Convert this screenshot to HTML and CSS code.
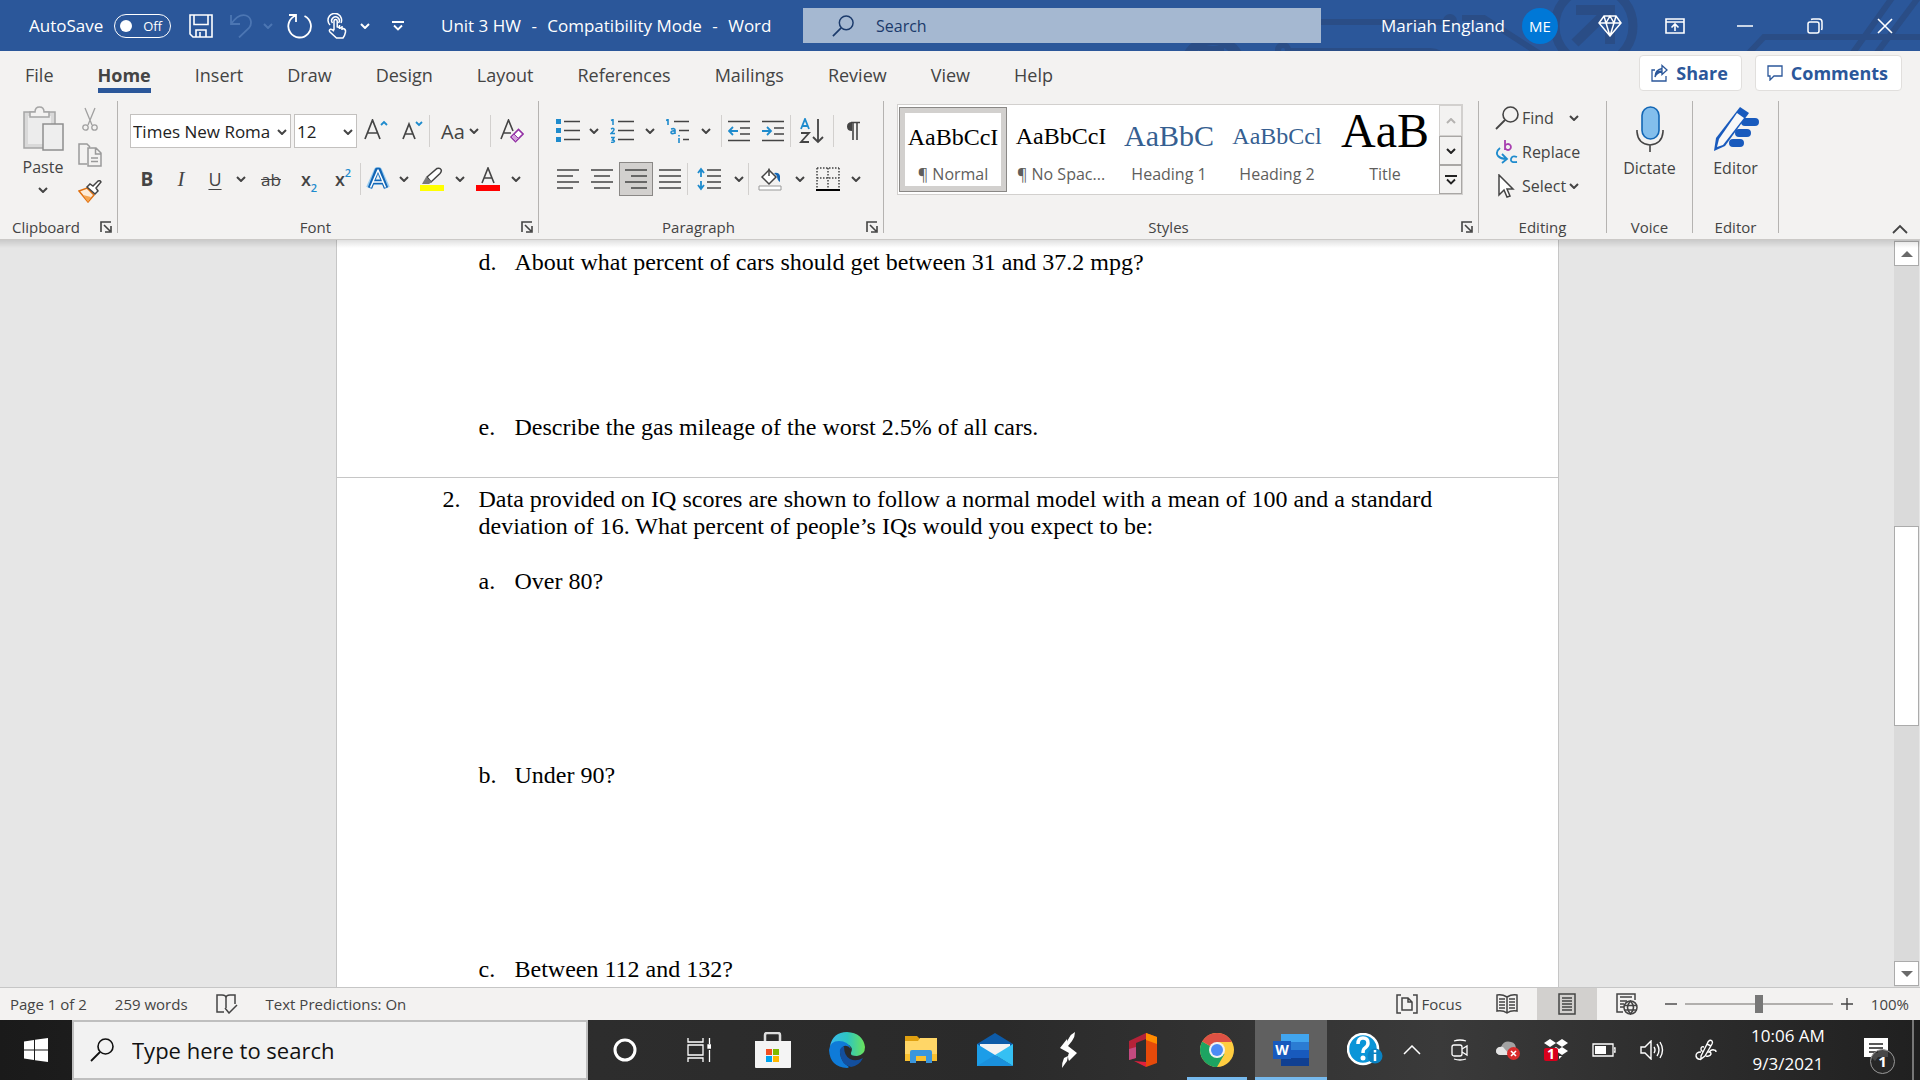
FILE: index.html
```html
<!DOCTYPE html>
<html lang="en">
<head>
<meta charset="UTF-8">
<meta name="viewport" content="width=device-width, initial-scale=1.0">
<title>Unit 3 HW - Compatibility Mode - Word</title>
<link rel="stylesheet" href="styles.css">
</head>
<body>

<!-- shared icons -->
<svg class="defs" width="0" height="0" aria-hidden="true">
  <symbol id="chev" viewBox="0 0 10 6"><path d="M1 1l4 4 4-4" fill="none" stroke="currentColor" stroke-width="2"/></symbol>
  <symbol id="launch" viewBox="0 0 12 12"><path d="M1 11V1h10M4 4l6 6M11 5v6H5" fill="none" stroke="currentColor" stroke-width="1.6"/></symbol>
  <symbol id="lens" viewBox="0 0 24 24"><circle cx="15.5" cy="8.500" r="7.500" fill="none" stroke="currentColor" stroke-width="1.600"/><path d="M10 14L1 23" stroke="currentColor" stroke-width="1.800"/></symbol>
</svg>

<header class="titlebar">
  <svg class="titlebar-art" width="760" height="51" viewBox="1160 0 760 51" aria-hidden="true">
    <g fill="none" stroke="#2a4d86" stroke-width="6">
      <path d="M1300 22h150M1462 18h22l56 36M1290 51h140q8 0 14 6M1748 54l16-17h156M1852 54l40-56M1876 54l42-56"/>
      <circle cx="1283" cy="50" r="5"/>
      <circle cx="1213" cy="68" r="28" stroke-width="10"/>
      <circle cx="1594" cy="26" r="39" stroke-width="9"/>
      <path d="M1576 10h34v34M1575 43l34-33" stroke-width="10"/>
    </g>
    <circle cx="1450" cy="21" r="7" fill="#2a4d86"/>
    <path d="M1199 46h25v5h-25z" fill="#2a4d86"/>
  </svg>
  <div class="title-left">
    <label class="autosave">AutoSave
      <span class="toggle"><input type="checkbox">Off</span>
    </label>
    <div class="quick">
      <button class="q40" aria-label="Save"><svg width="24" height="24" viewBox="0 0 24 24" fill="none" stroke="#fff" stroke-width="1.600"><path d="M1 1h22v22H4l-3-3zM5 1v9.500h14V1M7 23v-7h10v7M11 18v5"/></svg></button>
      <button class="q40 dim" aria-label="Undo"><svg width="24" height="24" viewBox="0 0 24 24" fill="none" stroke="currentColor" stroke-width="1.800"><path d="M2 1v9h9M2 10C7 3 12 0 17 1.500c6 2 6 9 3 12.500L10 23.500"/></svg></button>
      <button class="q14 dim" aria-label="Undo options"><svg width="10" height="6"><use href="#chev"/></svg></button>
      <button class="q50" aria-label="Repeat"><svg width="26" height="26" viewBox="0 0 26 26" fill="none" stroke="#fff" stroke-width="1.800"><path d="M2 2h7v7M9 2.500A11.300 11.300 0 1 0 17.500 3"/></svg></button>
      <button class="q24" aria-label="Touch mode"><svg width="20" height="26" viewBox="0 0 20 26" fill="none" stroke="#fff" stroke-width="1.500"><path d="M3 12a6.800 6.800 0 1 1 11-2"/><path d="M5.500 10a3.800 3.800 0 1 1 6 0" /><path d="M7 17V8a1.600 1.600 0 0 1 3.200 0v6l6 1.500q2.800.7 2.300 3.500l-1 3.500L16 25H9.500L3 19q-1.500-2 .5-2.800 1.500-.4 3.500 2M12.500 12v4M15 13v4"/></svg></button>
      <button class="q32" aria-label="Touch options"><svg width="10" height="6"><use href="#chev"/></svg></button>
      <button class="q34" aria-label="Customize Quick Access Toolbar"><svg width="12" height="10" viewBox="0 0 12 10" fill="none" stroke="#fff" stroke-width="1.800"><path d="M0 1h12M2 4.500l4 4 4-4"/></svg></button>
    </div>
    <h1 class="doc-title">Unit 3 HW <span>-</span> Compatibility Mode <span>-</span> Word</h1>
  </div>
  <label class="title-search">
    <svg width="22" height="22"><use href="#lens"/></svg>
    <input type="text" placeholder="Search" aria-label="Search">
  </label>
  <div class="title-right">
    <span class="user">Mariah England</span>
    <button class="avatar">ME</button>
    <button class="q60" aria-label="Premium"><svg width="24" height="22" viewBox="0 0 24 22" fill="none" stroke="#fff" stroke-width="1.500"><path d="M6 1h12l5 7-11 13L1 8zM1 8h22M6 1l2 7 4 13 4-13 2-7M8 8l4-7 4 7"/></svg></button>
    <button class="q70" aria-label="Ribbon display options"><svg width="20" height="16" viewBox="0 0 20 16" fill="none" stroke="#fff" stroke-width="1.600"><path d="M1 1h18v14H1zM1 4h18M10 13V6.500M6.500 9.500L10 6l3.500 3.500"/></svg></button>
    <button class="q70" aria-label="Minimize"><svg width="16" height="16" viewBox="0 0 16 16"><path d="M0 8h16" stroke="#fff" stroke-width="1.500"/></svg></button>
    <button class="q70" aria-label="Restore"><svg width="16" height="16" viewBox="0 0 16 16" fill="none" stroke="#fff" stroke-width="1.500"><rect x="1" y="4" width="11" height="11" rx="2"/><path d="M4 1.500Q5 1 6 1h6q3 0 3 3v6q0 1-.5 2"/></svg></button>
    <button class="q70" aria-label="Close"><svg width="16" height="16" viewBox="0 0 16 16"><path d="M1 1l14 14M15 1L1 15" stroke="#fff" stroke-width="1.600"/></svg></button>
  </div>
</header>

<nav class="tabs">
  <a href="#">File</a>
  <a href="#" class="active">Home</a>
  <a href="#">Insert</a>
  <a href="#">Draw</a>
  <a href="#">Design</a>
  <a href="#">Layout</a>
  <a href="#">References</a>
  <a href="#">Mailings</a>
  <a href="#">Review</a>
  <a href="#">View</a>
  <a href="#">Help</a>
  <div class="tab-actions">
    <button class="action"><svg width="17" height="18" viewBox="0 0 17 18" fill="none" stroke="currentColor" stroke-width="1.300"><path d="M4 6H1v11h14v-5M4 13q1-6 7-6V3.500V10.500M11 1.500l5 4.500-5 4.500V8q-5 0-7 5 0-7 7-8.500z"/></svg>Share</button>
    <button class="action"><svg width="16" height="16" viewBox="0 0 16 16" fill="none" stroke="currentColor" stroke-width="1.300"><path d="M1 1h14v10H7l-4 4v-4H1z"/></svg>Comments</button>
  </div>
</nav>

<section class="ribbon">
  <div class="group clipboard">
    <div class="clip-body">
      <button class="big">
        <svg width="41" height="45" viewBox="0 0 41 45"><path d="M1 6h31v36H1z" fill="#d9d9d9" stroke="#a5a5a5" stroke-width="1.500"/><path d="M5 10h23v28H5z" fill="#ececec"/><path d="M7 11V6h5q0-5 4.500-5T21 6h5v5z" fill="#f3f2f1" stroke="#a5a5a5" stroke-width="1.500"/><path d="M20 18h20v26H20z" fill="#eee" stroke="#8e8e8e" stroke-width="1.500"/></svg>
        Paste
        <svg class="below" width="10" height="6"><use href="#chev"/></svg>
      </button>
      <div class="clip-tools">
        <button aria-label="Cut"><svg width="16" height="24" viewBox="0 0 16 24" fill="none" stroke="#a0a0a0" stroke-width="1.300"><path d="M3 1l7 17M13 1L6 18"/><circle cx="3.500" cy="20.500" r="2.700"/><circle cx="12.500" cy="20.500" r="2.700"/></svg></button>
        <button aria-label="Copy"><svg width="24" height="24" viewBox="0 0 24 24" fill="none" stroke="#9a9a9a" stroke-width="1.500"><path d="M9 21H1V1h8l3 3M10 5h8l5 5v13H10zM17.500 5v6H23M13 15h7M13 18.500h7"/></svg></button>
        <button aria-label="Format Painter"><svg width="24" height="24" viewBox="0 0 24 24"><path d="M1 12l8-3 7 7-6 7z" fill="#fdebd7" stroke="#e07010" stroke-width="1.500"/><path d="M5 16l8 2-3 5z" fill="#f5a550"/><path d="M9 8l3-3 3 2 5-5q2-1 3 1l-5 6 2 3-3 3z" fill="#fff" stroke="#444" stroke-width="1.500"/></svg></button>
      </div>
    </div>
    <footer class="with-launch">Clipboard<button class="launch" aria-label="Clipboard settings"><svg width="12" height="12"><use href="#launch"/></svg></button></footer>
  </div>
  <div class="divider"></div>

  <div class="group font">
    <div class="row">
      <span class="combo family"><select aria-label="Font"><option>Times New Roma</option></select><svg width="10" height="6"><use href="#chev"/></svg></span>
      <span class="combo size"><select aria-label="Font size"><option>12</option></select><svg width="10" height="6"><use href="#chev"/></svg></span>
      <button class="w38" aria-label="Grow font"><svg width="24" height="24" viewBox="0 0 24 24" fill="none"><path d="M1 20L8.500 1 16 20M4 14h9" stroke="#444" stroke-width="1.700"/><path d="M17 6l3-3 3 3" stroke="#1e8bcd" stroke-width="1.800"/></svg></button>
      <button aria-label="Shrink font"><svg width="24" height="24" viewBox="0 0 24 24" fill="none"><path d="M3 20L9 5l6 15M5 15h8" stroke="#444" stroke-width="1.700"/><path d="M16 3l3 3 3-3" stroke="#1e8bcd" stroke-width="1.800"/></svg></button>
      <i class="sep"></i>
      <button class="case">Aa<svg width="10" height="6"><use href="#chev"/></svg></button>
      <i class="sep"></i>
      <button class="w42" aria-label="Clear formatting"><svg width="24" height="24" viewBox="0 0 24 24" fill="none"><path d="M1 20L8.500 1l4.500 11M4 14h7" stroke="#444" stroke-width="1.600"/><path d="M11 18l7.500-7.500 4.500 4.500-7.500 7.500z" fill="#fff" stroke="#9332a5" stroke-width="1.600"/><path d="M11 18l3-3 4.500 4.500-3 3z" fill="#d29fdc" stroke="#9332a5"/></svg></button>
    </div>
    <div class="row">
      <button class="bold">B</button>
      <button class="italic">I</button>
      <button class="underline">U</button>
      <button class="drop" aria-label="Underline style"><svg width="10" height="6"><use href="#chev"/></svg></button>
      <button class="strike w42">ab</button>
      <button class="script">x<sub>2</sub></button>
      <button class="script">x<sup>2</sup></button>
      <i class="sep"></i>
      <button aria-label="Text effects"><svg width="24" height="24" viewBox="0 0 24 24" fill="none" stroke-linejoin="round"><path d="M3 21L11 3h2l8 18M7 15h10" stroke="#9ccdf0" stroke-width="6"/><path d="M4 21L11 3h2l7 18M7 15h10" stroke="#1266b5" stroke-width="4.500"/><path d="M4.500 20.500L12 3l7.500 17.500M7 15h10" stroke="#fff" stroke-width="1.500"/></svg></button>
      <button class="drop" aria-label="Text effect options"><svg width="10" height="6"><use href="#chev"/></svg></button>
      <button class="w38" aria-label="Highlight"><svg width="24" height="24" viewBox="0 0 24 24"><path d="M7 10l10-8.500q3-1 4 1t-1 4L11 15z" fill="#fff" stroke="#444" stroke-width="1.500"/><path d="M6 10l6 5-3 2H2z" fill="#7a7a7a"/><path d="M0 18h24v6H0z" fill="#ff0"/></svg></button>
      <button class="drop" aria-label="Highlight color"><svg width="10" height="6"><use href="#chev"/></svg></button>
      <button class="w38" aria-label="Font color"><svg width="24" height="24" viewBox="0 0 24 24"><path d="M6 16L12 1l6 15M8 11h8" fill="none" stroke="#444" stroke-width="1.600"/><path d="M0 18h24v6H0z" fill="red"/></svg></button>
      <button class="drop" aria-label="Font color options"><svg width="10" height="6"><use href="#chev"/></svg></button>
    </div>
    <footer class="with-launch">Font<button class="launch" aria-label="Font settings"><svg width="12" height="12"><use href="#launch"/></svg></button></footer>
  </div>
  <div class="divider"></div>

  <div class="group paragraph">
    <div class="row">
      <button aria-label="Bullets"><svg width="24" height="24" viewBox="0 0 24 24"><path d="M0 0h5v5H0zM0 9h5v5H0zM0 18h5v5H0z" fill="#1e8bcd"/><path d="M8 2.500h16M8 11.500h16M8 20.500h16" stroke="#444" stroke-width="1.500"/></svg></button>
      <button class="drop" aria-label="Bullet library"><svg width="10" height="6"><use href="#chev"/></svg></button>
      <button class="w38" aria-label="Numbering"><svg width="24" height="24" viewBox="0 0 24 24"><path d="M1 1.500L3 .5V6M1 10q3-1.500 3 .5 0 1-3 4h4M1 18.500h3L2.500 21q2 0 2 1.200T1 23.500" fill="none" stroke="#1e8bcd" stroke-width="1.500"/><path d="M8 2.500h16M8 11.500h16M8 20.500h16" stroke="#444" stroke-width="1.500"/></svg></button>
      <button class="drop" aria-label="Numbering library"><svg width="10" height="6"><use href="#chev"/></svg></button>
      <button class="w38" aria-label="Multilevel list"><svg width="24" height="24" viewBox="0 0 24 24"><path d="M0 1.500L2 .5V6M5 10q4-1 4 1v4M9 12q-4-.5-4 1.500T9 14M13 19v5M13 16v1.500" fill="none" stroke="#1e8bcd" stroke-width="1.600"/><path d="M8 2.500h15M13 11.500h10M17 20.500h6" stroke="#444" stroke-width="1.500"/></svg></button>
      <button class="drop roomy" aria-label="List library"><svg width="10" height="6"><use href="#chev"/></svg></button>
      <i class="sep"></i>
      <button aria-label="Decrease indent"><svg width="22" height="22" viewBox="0 0 22 22" fill="none" stroke="#444" stroke-width="1.500"><path d="M0 1.500h22M12 8h10M12 14h10M0 20.500h22"/><path d="M10 11H1M5 7l-4 4 4 4" stroke="#1e8bcd" stroke-width="1.800"/></svg></button>
      <button aria-label="Increase indent"><svg width="22" height="22" viewBox="0 0 22 22" fill="none" stroke="#444" stroke-width="1.500"><path d="M0 1.500h22M12 8h10M12 14h10M0 20.500h22"/><path d="M0 11h9M5 7l4 4-4 4" stroke="#1e8bcd" stroke-width="1.800"/></svg></button>
      <i class="sep"></i>
      <button class="w42" aria-label="Sort"><svg width="26" height="26" viewBox="0 0 26 26" fill="none" stroke-width="1.800"><path d="M2 11L6 1l4 10M3 8h6" stroke="#1e8bcd"/><path d="M2 15h8L2 24h8M19 1v23M14 19l5 5 5-5" stroke="#444"/></svg></button>
      <i class="sep"></i>
      <button class="w38" aria-label="Show marks"><svg width="14" height="20" viewBox="0 0 14 20"><path d="M6 1v9q-5 0-5-4.500T6 1z" fill="#444"/><path d="M5 1.500h9M7 1v18M11 1v18" stroke="#444" stroke-width="1.600"/></svg></button>
    </div>
    <div class="row">
      <button aria-label="Align left"><svg width="22" height="22" viewBox="0 0 22 22" stroke="#444" stroke-width="1.600"><path d="M0 2h22M0 8h16M0 14h22M0 20h16"/></svg></button>
      <button aria-label="Center"><svg width="22" height="22" viewBox="0 0 22 22" stroke="#444" stroke-width="1.600"><path d="M0 2h22M3 8h16M0 14h22M3 20h16"/></svg></button>
      <button class="on" aria-label="Align right"><svg width="22" height="22" viewBox="0 0 22 22" stroke="#444" stroke-width="1.600"><path d="M0 2h22M6 8h16M0 14h22M6 20h16"/></svg></button>
      <button aria-label="Justify"><svg width="22" height="22" viewBox="0 0 22 22" stroke="#444" stroke-width="1.600"><path d="M0 2h22M0 8h22M0 14h22M0 20h22"/></svg></button>
      <i class="sep"></i>
      <button class="w42" aria-label="Line spacing"><svg width="24" height="24" viewBox="0 0 24 24" fill="none"><path d="M10 3h14M10 9h14M10 15h14M10 21h14" stroke="#444" stroke-width="1.600"/><path d="M4 10V2M1 6l3-4 3 4M4 14v8M1 18l3 4 3-4" stroke="#1e8bcd" stroke-width="1.800"/></svg></button>
      <button class="drop" aria-label="Spacing options"><svg width="10" height="6"><use href="#chev"/></svg></button>
      <i class="sep"></i>
      <button class="w42" aria-label="Shading"><svg width="24" height="24" viewBox="0 0 24 24"><path d="M11 3l7 7-7 7-7-7z" fill="#fff" stroke="#444" stroke-width="1.500"/><path d="M11 9V1.500" stroke="#444" stroke-width="1.500"/><path d="M16 6q5-1 6 3v6q-3-2-3-6z" fill="#1266b5"/><path d="M1 19h22v4H1z" fill="#fff" stroke="#999"/></svg></button>
      <button class="drop" aria-label="Shading color"><svg width="10" height="6"><use href="#chev"/></svg></button>
      <button class="w38" aria-label="Borders"><svg width="24" height="24" viewBox="0 0 24 24" fill="none" stroke="#444" stroke-width="1.500"><path d="M1 1h22M1 11h22M1 1v20M12 1v20M23 1v20" stroke-dasharray="1.500 1.500"/><path d="M0 23h24" stroke="#000" stroke-width="2"/></svg></button>
      <button class="drop" aria-label="Border options"><svg width="10" height="6"><use href="#chev"/></svg></button>
    </div>
    <footer class="with-launch">Paragraph<button class="launch" aria-label="Paragraph settings"><svg width="12" height="12"><use href="#launch"/></svg></button></footer>
  </div>
  <div class="divider"></div>

  <div class="group styles">
    <div class="gallery">
      <button class="style selected"><span class="sample">AaBbCcI</span><span>¶ Normal</span></button>
      <button class="style"><span class="sample">AaBbCcI</span><span>¶ No Spac...</span></button>
      <button class="style"><span class="sample h1">AaBbC</span><span>Heading 1</span></button>
      <button class="style"><span class="sample h2">AaBbCcl</span><span>Heading 2</span></button>
      <button class="style"><span class="sample title">AaB</span><span>Title</span></button>
      <div class="gallery-nav">
        <button class="off" aria-label="Previous styles"><svg class="flip" width="10" height="6"><use href="#chev"/></svg></button>
        <button aria-label="Next styles"><svg width="10" height="6"><use href="#chev"/></svg></button>
        <button aria-label="More styles"><svg width="12" height="10" viewBox="0 0 12 10" fill="none" stroke="#222" stroke-width="1.800"><path d="M0 1h12M2 4.500l4 4 4-4"/></svg></button>
      </div>
    </div>
    <footer class="with-launch">Styles<button class="launch" aria-label="Styles pane"><svg width="12" height="12"><use href="#launch"/></svg></button></footer>
  </div>
  <div class="divider"></div>

  <div class="group editing">
    <div class="edit-list">
      <button><svg width="24" height="24"><use href="#lens"/></svg>Find<svg class="far" width="10" height="6"><use href="#chev"/></svg></button>
      <button><svg width="24" height="24" viewBox="0 0 24 24" fill="none" stroke-width="1.800"><path d="M10 0v10M10 6.500a3 3 0 1 1 0 1" stroke="#a83fb0"/><path d="M22 17q-5-2-6 2t6 3" stroke="#1e8bcd"/><path d="M5 8q-5 4-2 8 3 3 8 3M7 14l5 5-5 4" stroke="#1e8bcd"/></svg>Replace</button>
      <button><svg width="24" height="24" viewBox="0 0 24 24"><path d="M4 1v20l5-5 3 7 3-1-3-7h6z" fill="#fff" stroke="#444" stroke-width="1.500"/></svg>Select<svg width="10" height="6"><use href="#chev"/></svg></button>
    </div>
    <footer>Editing</footer>
  </div>
  <div class="divider"></div>

  <div class="group voice">
    <button class="big">
      <svg width="28" height="46" viewBox="0 0 28 46" fill="none"><rect x="6" y="1" width="17" height="32" rx="8.500" fill="#83beec" stroke="#1266b5" stroke-width="1.600"/><path d="M1 24v2q1 12 13 13 12-1 13-13v-2M14 39v7" stroke="#444" stroke-width="1.600"/></svg>
      Dictate
    </button>
    <footer>Voice</footer>
  </div>
  <div class="divider"></div>

  <div class="group editor">
    <button class="big">
      <svg width="46" height="46" viewBox="0 0 46 46"><path d="M32 16h10M26 27h8M20 37h7" stroke="#185abd" stroke-width="8" stroke-linecap="round"/><path d="M27 1l9 6-24 33-11 5 2-13z" fill="#185abd"/><path d="M24 7l7 5-21 27-6 2 2-8z" fill="#f8f8f8"/></svg>
      Editor
    </button>
    <footer>Editor</footer>
  </div>
  <div class="divider"></div>
  <button class="collapse" aria-label="Collapse the ribbon"><svg width="16" height="10" viewBox="0 0 16 10"><path d="M1 9l7-7 7 7" fill="none" stroke="#444" stroke-width="1.800"/></svg></button>
</section>

<main class="workspace">
  <article class="page">
    <div class="sheet first">
      <p class="part gap-5"><span>d.</span>About what percent of cars should get between 31 and 37.2 mpg?</p>
      <p class="part"><span>e.</span>Describe the gas mileage of the worst 2.5% of all cars.</p>
    </div>
    <div class="sheet">
      <p class="question"><span>2.</span>Data provided on IQ scores are shown to follow a normal model with a mean of 100 and a standard deviation of 16. What percent of people’s IQs would you expect to be:</p>
      <p class="part gap-6"><span>a.</span>Over 80?</p>
      <p class="part gap-6"><span>b.</span>Under 90?</p>
      <p class="part"><span>c.</span>Between 112 and 132?</p>
    </div>
  </article>
  <div class="scrollbar">
    <button aria-label="Scroll up"><svg width="12" height="6" viewBox="0 0 12 6"><path d="M6 0l6 6H0z" fill="#6a6a6a"/></svg></button>
    <div class="track"><div class="thumb"></div></div>
    <button aria-label="Scroll down"><svg width="12" height="6" viewBox="0 0 12 6"><path d="M0 0h12L6 6z" fill="#6a6a6a"/></svg></button>
  </div>
</main>

<footer class="statusbar">
  <span class="pages">Page 1 of 2</span>
  <span>259 words</span>
  <button aria-label="Proofing"><svg width="22" height="20" viewBox="0 0 22 20" fill="none" stroke="#444" stroke-width="1.500"><path d="M8 18H1V1h5q4 0 4 3v10M10 4q0-3 4-3h5v9M9 14l4 5 8-8"/></svg></button>
  <span>Text Predictions: On</span>
  <div class="views">
    <button class="focus"><svg width="22" height="20" viewBox="0 0 22 20" fill="none" stroke="#444" stroke-width="1.500"><path d="M5 1H1v18h4M17 1h4v18h-4M6 4h6l4 4v8H6zM12 4v4h4"/></svg>Focus</button>
    <button aria-label="Read mode"><svg width="22" height="20" viewBox="0 0 22 20" fill="none" stroke="#444" stroke-width="1.500"><path d="M11 3Q6 0 1 1v16q6-1 10 2 4-3 10-2V1q-5-1-10 2v16M3 5h6M3 8h6M3 11h6M3 14h6M13 5h6M13 8h6M13 11h6M13 14h6"/></svg></button>
    <button class="on" aria-label="Print layout"><svg width="18" height="22" viewBox="0 0 18 22" fill="none" stroke="#444" stroke-width="1.500"><path d="M1 1h16v20H1zM4 5h10M4 8h10M4 11h10M4 14h10M4 17h10"/></svg></button>
    <button aria-label="Web layout"><svg width="22" height="22" viewBox="0 0 22 22" fill="none" stroke="#444" stroke-width="1.500"><path d="M7 19H1V1h18v6M4 4h12M4 8h7M4 11h4M4 14h4"/><circle cx="14.500" cy="14.500" r="6.500" fill="#f3f2f1"/><path d="M8 12.500h13M8 17h13M14.500 8q-6 6.500 0 13 6-6.500 0-13z"/></svg></button>
  </div>
  <div class="zoom">
    <button aria-label="Zoom out"><svg width="12" height="12" viewBox="0 0 12 12"><path d="M0 6h12" stroke="#444" stroke-width="1.400"/></svg></button>
    <input type="range" min="0" max="100" value="50" aria-label="Zoom">
    <button aria-label="Zoom in"><svg width="12" height="12" viewBox="0 0 12 12"><path d="M0 6h12M6 0v12" stroke="#444" stroke-width="1.400"/></svg></button>
    <span>100%</span>
  </div>
</footer>

<footer class="taskbar">
  <button class="start" aria-label="Start"><svg width="24" height="24" viewBox="0 0 24 24" fill="#fff"><path d="M0 3.500l10-1.500v9.500H0zM11 1.800L24 0v11.500H11zM0 12.500h10V22L0 20.500zM11 12.500h13V24l-13-1.800z"/></svg></button>
  <label class="task-search">
    <svg width="24" height="24"><use href="#lens"/></svg>
    <input type="text" placeholder="Type here to search" aria-label="Type here to search">
  </label>
  <div class="apps">
    <button aria-label="Cortana"><svg width="24" height="24" viewBox="0 0 24 24"><circle cx="12" cy="12" r="10" fill="none" stroke="#fff" stroke-width="3"/></svg></button>
    <button aria-label="Task view"><svg width="24" height="24" viewBox="0 0 24 24" fill="none" stroke="#fff" stroke-width="1.300"><path d="M1 0v4h15V0M1 7h15v10H1zM1 24v-4h15v4M22.500 0v6M22.500 12v12"/><path d="M21 7h3v3h-3z" fill="#fff"/></svg></button>
    <button aria-label="Store"><svg width="36" height="36" viewBox="0 0 36 36"><path d="M10 12V3q0-2 2-2h11q2 0 2 2v9" fill="none" stroke="#ddd" stroke-width="2.500"/><path d="M0 9h36v26q0 1-1 1H1q-1 0-1-1z" fill="#f4f4f4"/><path d="M11 17h6v6h-6z" fill="#f25022"/><path d="M18 17h6v6h-6z" fill="#7fba00"/><path d="M11 24h6v6h-6z" fill="#00a4ef"/><path d="M18 24h6v6h-6z" fill="#ffb900"/></svg></button>
    <button aria-label="Edge"><svg width="36" height="36" viewBox="0 0 36 36">
      <defs><linearGradient id="edge" x1="0" x2="1"><stop offset="0" stop-color="#38b9ef"/><stop offset=".5" stop-color="#2ec6c0"/><stop offset="1" stop-color="#6be35a"/></linearGradient></defs>
      <path d="M1 14Q4 0 18 0q16 1 18 15 0 8-8 9-7 0-6-3 3-6-4-9-8-3-17 2z" fill="url(#edge)"/>
      <path d="M0 18Q1 9 10 9q9 0 12 8-3-4-7-3-4 2-4 7 1 9 9 14-1 1-2 1Q1 35 0 18z" fill="#0f7bd8"/>
      <path d="M15 14q-5 2-4 7 1 12 11 14 8-1 12-9-7 4-13 1-6-3-6-13z" fill="#134f9e"/></svg></button>
    <button aria-label="File Explorer"><svg width="32" height="28" viewBox="0 0 32 28"><path d="M0 0h12l3 3v3H0z" fill="#e0a010"/><path d="M0 5h13l2-3h17v23H0z" fill="#ffd667"/><path d="M0 18h32v7H0z" fill="#f9c02f"/><path d="M5 27V16q0-2 2-2h18q2 0 2 2v11h-6v-7H11v7z" fill="#3a96dd"/></svg></button>
    <button aria-label="Mail"><svg width="36" height="34" viewBox="0 0 36 34"><path d="M0 11L18 0l18 11v8H0z" fill="#0d5ba8"/><path d="M3 11h30v6L18 24 3 17z" fill="#f2f2f2"/><path d="M0 11l36 22H0z" fill="#1c9de8"/><path d="M36 11v22L18 22z" fill="#35c0f3"/><path d="M0 33l18-11 18 11z" fill="#1a90dc"/></svg></button>
    <button aria-label="S app"><svg width="18" height="36" viewBox="0 0 18 36" fill="#fff"><path d="M15 0q0 5-3 9l-4 5q-2-4 1-8 2-4 6-6zM7 7l1 7 9 7-8 8q-2-5 0-8L0 16z"/><path d="M8 24l-1 5-5 7q0-6 2-10z"/></svg></button>
    <button aria-label="Office"><svg width="28" height="34" viewBox="0 0 28 34"><path d="M0 8L17 0v6L7 10v15l-7 2z" fill="#b52238"/><path d="M0 16l7-2v11l-7 2z" fill="#c44a80"/><path d="M17 0l11 4v26l-11 4z" fill="#e64a0a"/><path d="M17 0l11 4v7l-11-4z" fill="#ff8c00"/><path d="M5 28l12 1v5z" fill="#e0203c"/></svg></button>
    <button class="running" aria-label="Chrome"><svg width="34" height="34" viewBox="0 0 34 34"><circle cx="17" cy="17" r="17" fill="#ffcd40"/><path d="M17 17L2.300 8.500A17 17 0 0 0 17 34l7.500-13z" fill="#1da462"/><path d="M17 17L2.300 8.500A17 17 0 0 1 32 9H17z" fill="#dd5144"/><circle cx="17" cy="17" r="8" fill="#f1f1f1"/><circle cx="17" cy="17" r="6" fill="#4c8bf5"/></svg></button>
    <button class="running current" aria-label="Word"><svg width="36" height="32" viewBox="0 0 36 32"><path d="M8 0h28v8H8z" fill="#41a5ee"/><path d="M8 8h28v8H8z" fill="#2b7cd3"/><path d="M8 16h28v8H8z" fill="#185abd"/><path d="M8 24h28v8H8z" fill="#103f91"/><path d="M0 7h18v18H0z" fill="#185abd"/><text class="w" x="9" y="21">W</text></svg></button>
    <button aria-label="Get Help"><svg width="36" height="34" viewBox="0 0 36 34"><circle cx="16" cy="16" r="15" fill="#0a95d8" stroke="#fff" stroke-width="2.500"/><path d="M11 11q0-6 5-6t5 5q0 3-3 5-2 1-2 5" fill="none" stroke="#fff" stroke-width="3.500"/><circle cx="16" cy="25" r="2.500" fill="#fff"/><circle cx="28" cy="23" r="7.500" fill="#0a83c4"/><path d="M28 21v7M28 17v2.500" stroke="#fff" stroke-width="2.500"/></svg></button>
  </div>
  <div class="tray">
    <button class="more" aria-label="Show hidden icons"><svg width="18" height="10" viewBox="0 0 18 10"><path d="M1 9l8-8 8 8" fill="none" stroke="#fff" stroke-width="1.500"/></svg></button>
    <button aria-label="Meet Now"><svg width="18" height="22" viewBox="0 0 18 22" fill="none" stroke="#fff" stroke-width="1.300"><rect x="1" y="6" width="10" height="11" rx="2"/><path d="M11 10l5-3v9l-5-3M3 2q6-2 12 0M3 20q6 2 12 0"/></svg></button>
    <button aria-label="OneDrive"><svg width="24" height="20" viewBox="0 0 24 20"><path d="M4 15q-4-1-4-4 0-4 5-4 3-7 10-5 5 1 5 7 0 6-4 6z" fill="#a2a2a2"/><path d="M4 15q-4-1-4-4 1-5 7-4l7 8z" fill="#e4e4e4"/><circle cx="17.500" cy="13.500" r="6.500" fill="#d92c2c"/><path d="M15 11l5 5M20 11l-5 5" stroke="#fff" stroke-width="1.600"/></svg></button>
    <button aria-label="Dropbox"><svg width="24" height="22" viewBox="0 0 24 22"><path d="M6 0l6 4-6 4-6-4zM18 0l6 4-6 4-6-4zM18 8l6 4-6 4-6-4zM12 8l3 2-3 3-3-3zM15 17h3l-3 3z" fill="#fff"/><rect y="9" width="14" height="13" rx="2" fill="#d8001c"/><text class="badge" x="7" y="20">1</text></svg></button>
    <button aria-label="Battery"><svg width="24" height="14" viewBox="0 0 24 14"><path d="M1 1h20v12H1zM22 5h1v4h-1" fill="none" stroke="#fff" stroke-width="1.300"/><path d="M3 3h11v8H3z" fill="#fff"/></svg></button>
    <button aria-label="Volume"><svg width="24" height="20" viewBox="0 0 24 20" fill="none" stroke="#fff" stroke-width="1.400"><path d="M1 7h4l6-6v18l-6-6H1zM14 7q2 3 0 6M17 4q4 6 0 12M20 2q5 8 0 16"/></svg></button>
    <button class="pen" aria-label="Windows Ink"><svg width="22" height="22" viewBox="0 0 22 22" fill="none" stroke="#fff" stroke-width="1.400"><path d="M6 17L13 3q2-3 4-1 1 1 0 3L10 17l-4 3zM12 5l4 2M9 8q-3-1-3 2t3 2M6 13q-5 0-5 4 1 4 5 3M11 17q4 1 5-2 0-2-2-2 3-3 5-2 2 0 2 2"/></svg></button>
    <button class="clock"><span>10:06 AM</span><span>9/3/2021</span></button>
    <button class="notify" aria-label="Notifications"><svg width="24" height="24" viewBox="0 0 24 24"><path d="M0 0h24v19H14l-3 4-4-4H0z" fill="#fff"/><path d="M5 6h14M5 10h14M5 14h9" stroke="#222" stroke-width="1.300"/></svg><b>1</b></button>
    <button class="desktop" aria-label="Show desktop"></button>
  </div>
</footer>

</body>
</html>
```

FILE: styles.css
```css
* {
  box-sizing: border-box;
}
body {
  margin: 0;
  height: 100vh;
  display: flex;
  flex-direction: column;
  overflow: hidden;
  font-family: "Open Sans", "Noto Sans", sans-serif;
  font-size: 17px;
  color: #444;
  background-color: #e6e6e6;
}
button {
  display: flex;
  align-items: center;
  justify-content: center;
  flex-shrink: 0;
  padding: 0;
  border: none;
  background: none;
  color: inherit;
  font: inherit;
}
input, select {
  font: inherit;
  color: inherit;
  border: none;
  background: none;
  outline: none;
}
p, h1 {
  margin: 0;
}
svg {
  display: block;
  flex-shrink: 0;
}
.defs {
  position: absolute;
}

/* title bar */
.titlebar {
  position: relative;
  display: grid;
  grid-template-columns: 803fr 518fr 599fr;
  align-items: center;
  height: 51px;
  flex-shrink: 0;
  background-color: #2b579a;
  color: #fff;
}
.titlebar-art {
  position: absolute;
  right: 0;
  top: 0;
}
.title-left, .title-right, .quick, .autosave {
  display: flex;
  align-items: center;
}
.title-left {
  padding-left: 29px;
}
.autosave {
  width: 152px;
  justify-content: space-between;
  padding-right: 10px;
}
.toggle {
  display: flex;
  align-items: center;
  justify-content: space-between;
  width: 57px;
  height: 24px;
  padding: 0 8px 0 5px;
  border: 1px solid #fff;
  border-radius: 12px;
  font-size: 13px;
}
.toggle input {
  appearance: none;
  width: 12px;
  height: 12px;
  margin: 0;
  border-radius: 50%;
  background-color: #fff;
}
.dim {
  color: #4c76b3;
}
.q14 { width: 14px; }
.q24 { width: 24px; }
.q32 { width: 32px; }
.q34 { width: 34px; }
.q40 { width: 40px; }
.q50 { width: 50px; }
.q60 { width: 60px; }
.q70 { width: 70px; }
.doc-title {
  padding-left: 26px;
  font-size: 17px;
  font-weight: 400;
  white-space: nowrap;
}
.doc-title span {
  padding: 0 6px;
}
.title-search {
  position: relative;
  display: flex;
  align-items: center;
  gap: 22px;
  height: 35px;
  padding-left: 29px;
  background-color: #a5b8d1;
  color: #1b3a6b;
}
.title-search input {
  flex: 1;
  min-width: 0;
  padding: 0;
  font-size: 16px;
}
input::placeholder {
  color: inherit;
  opacity: 1;
}
.title-right {
  position: relative;
  justify-content: flex-end;
}
.avatar {
  width: 36px;
  height: 36px;
  margin: 0 22px 0 17px;
  border-radius: 50%;
  background-color: #0078d7;
  font-size: 15px;
}

/* tabs */
.tabs {
  display: flex;
  gap: 44px;
  height: 50px;
  flex-shrink: 0;
  padding: 0 18px 0 25px;
  background-color: #f3f2f1;
  font-size: 18px;
}
.tabs a {
  height: 42px;
  line-height: 48px;
  color: #444;
  text-decoration: none;
}
.tabs .active {
  font-weight: 700;
  border-bottom: 5px solid #2b579a;
}
.tab-actions {
  display: flex;
  gap: 13px;
  margin-left: auto;
  padding-top: 4px;
}
.action {
  gap: 8px;
  height: 36px;
  padding: 0 13px 0 11px;
  border: 1px solid #e1dfdd;
  border-radius: 4px;
  background-color: #fff;
  color: #2b579a;
  font-weight: 700;
}

/* ribbon */
.ribbon {
  display: flex;
  height: 139px;
  flex-shrink: 0;
  border-bottom: 1px solid #cbc9c7;
  background-color: #f3f2f1;
  font-size: 16px;
}
.divider {
  width: 1px;
  height: 132px;
  background-color: #b5b3b1;
}
.group {
  display: flex;
  flex-direction: column;
}
.group footer {
  position: relative;
  height: 22px;
  margin-top: auto;
  font-size: 15px;
  line-height: 20px;
  text-align: center;
}
.group .with-launch {
  padding-right: 25px;
}
.launch {
  position: absolute;
  right: 5px;
  top: 4px;
}
.clipboard { width: 117px; }
.font { width: 420px; }
.paragraph { width: 344px; }
.styles { width: 594px; }
.editing { width: 127px; }
.voice, .editor { width: 85px; }
.font, .paragraph {
  padding-top: 13px;
}
.clip-body {
  display: flex;
  align-items: flex-start;
  padding-left: 12px;
}
.big {
  flex-direction: column;
  gap: 4px;
  min-width: 62px;
  padding-top: 5px;
  line-height: 24px;
}
.below {
  margin-top: 4px;
}
.clip-tools button {
  width: 32px;
  height: 36px;
}
.row {
  display: flex;
  align-items: center;
  height: 34px;
  margin-bottom: 14px;
  padding-left: 12px;
}
.row button {
  width: 34px;
  height: 34px;
}
.row .drop {
  width: 18px;
}
.row .roomy {
  width: 24px;
  padding-right: 6px;
}
.row .w38 { width: 38px; }
.row .w42 { width: 42px; }
.row .case {
  gap: 4px;
  width: 60px;
  font-size: 20px;
}
.row .on {
  border: 1px solid #8a8886;
  background-color: #d2d0ce;
}
.sep {
  width: 1px;
  height: 32px;
  background-color: #d2d0ce;
}
.combo {
  position: relative;
  height: 34px;
  margin-right: 3px;
}
.combo select {
  appearance: none;
  width: 100%;
  height: 100%;
  padding: 0 2px;
  border: 1px solid #c3c1bf;
  background-color: #fff;
  color: #222;
  font-size: 17px;
}
.combo svg {
  position: absolute;
  right: 4px;
  top: 15px;
}
.family { width: 161px; }
.size { width: 63px; margin-right: 0; }
.bold {
  font-size: 19px;
  font-weight: 700;
}
.italic {
  font-family: "Liberation Serif", serif;
  font-size: 21px;
  font-style: italic;
}
.underline {
  font-size: 18px;
  text-decoration: underline;
  text-underline-offset: 3px;
}
.strike {
  font-size: 17px;
  text-decoration: line-through;
}
.script {
  font-size: 18px;
  font-weight: 600;
}
.script sub, .script sup {
  color: #1e8bcd;
  font-size: 11px;
}
.script sub {
  margin-top: 16px;
}
.script sup {
  margin-bottom: 14px;
}

/* styles gallery */
.gallery {
  display: flex;
  height: 91px;
  margin: 3px 15px 0 13px;
  padding-left: 1px;
  border: 1px solid #d2d0ce;
  background-color: #fff;
}
.style {
  flex-direction: column;
  justify-content: flex-start;
  width: 108px;
  height: 85px;
  margin-top: 2px;
  color: #605e5c;
}
.style.selected {
  border: 1px solid #8a8886;
  box-shadow: inset 0 0 0 5px #d2d0ce;
}
.sample {
  width: 92px;
  height: 56px;
  overflow: hidden;
  color: #000;
  font-family: "Liberation Serif", serif;
  font-size: 24px;
  line-height: 58px;
  white-space: nowrap;
}
.selected .sample {
  height: 55px;
}
.sample.h1 {
  color: #365f91;
  font-size: 30px;
}
.sample.h2 {
  color: #365f91;
}
.sample.title {
  font-size: 48px;
  line-height: 48px;
}
.gallery-nav {
  display: grid;
  grid-template-rows: 31px 29px 29px;
  flex: 1;
  color: #222;
}
.gallery-nav button {
  border: 1px solid #a9a7a5;
  background-color: #f3f2f1;
}
.gallery-nav .off {
  color: #b5b3b1;
  border-color: #d2d0ce;
}
.flip {
  transform: scaleY(-1);
}
.edit-list {
  padding-left: 16px;
}
.edit-list button {
  gap: 3px;
  height: 34px;
}
.edit-list .far {
  margin-left: 12px;
}
.collapse {
  align-self: flex-end;
  margin: 0 12px 5px auto;
}

/* document */
.workspace {
  position: relative;
  display: flex;
  flex: 1;
  min-height: 0;
  padding-right: 1px;
}
.workspace::before {
  content: "";
  position: absolute;
  inset: 0 0 auto;
  height: 8px;
  background-image: linear-gradient(rgba(0, 0, 0, 0.12), rgba(0, 0, 0, 0));
}
.page {
  width: 1223px;
  margin: 0 auto;
  overflow: hidden;
  border: solid #c6c6c6;
  border-width: 0 1px;
  background-color: #fff;
  color: #000;
  font-family: "Liberation Serif", "Times New Roman", serif;
  font-size: 24px;
  line-height: 27px;
}
.sheet {
  padding: 8px 110px 0 142px;
}
.sheet.first {
  padding-top: 9px;
  padding-bottom: 36px;
  border-bottom: 1px solid #c6c6c6;
}
.question, .part {
  display: flex;
}
.question {
  margin-left: -36px;
  margin-bottom: 28px;
}
.question span, .part span {
  width: 36px;
  flex-shrink: 0;
}
.gap-5 { margin-bottom: 138px; }
.gap-6 { margin-bottom: 167px; }
.scrollbar {
  display: flex;
  flex-direction: column;
  width: 25px;
  padding: 1px 0;
  background-color: #dadada;
}
.scrollbar button, .thumb {
  height: 25px;
  border: 1px solid #ababab;
  background-color: #fff;
}
.track {
  display: grid;
  grid-template-rows: 260fr 200fr 235fr;
  flex: 1;
}
.thumb {
  grid-row: 2;
  height: auto;
}

/* status bar */
.statusbar {
  display: flex;
  align-items: center;
  gap: 28px;
  height: 33px;
  flex-shrink: 0;
  padding-left: 10px;
  border-top: 1px solid #c6c6c6;
  background-color: #f3f2f1;
  font-size: 15px;
}
.views {
  display: flex;
  align-self: stretch;
  margin-left: auto;
}
.views button {
  width: 60px;
}
.views .focus {
  gap: 4px;
  width: auto;
  margin-right: 15px;
}
.views .on {
  background-color: #d2d0ce;
}
.zoom {
  display: flex;
  align-items: center;
  gap: 8px;
  margin-left: -20px;
  padding-right: 11px;
}
.zoom span {
  margin-left: 10px;
}
.zoom input {
  appearance: none;
  width: 148px;
  height: 18px;
  margin: 0;
}
.zoom input::-webkit-slider-runnable-track {
  height: 2px;
  background-color: #b1afad;
}
.zoom input::-webkit-slider-thumb {
  appearance: none;
  width: 8px;
  height: 18px;
  margin-top: -8px;
  background-color: #777;
}

/* taskbar */
.taskbar {
  display: flex;
  height: 60px;
  flex-shrink: 0;
  background-image: linear-gradient(90deg, #1a1a1a, #2d2d2d 31%, #2a2a2a 52%, #3a3a3a 75%, #202020);
  color: #fff;
}
.start {
  width: 72px;
}
.task-search {
  display: flex;
  align-items: center;
  gap: 18px;
  width: 516px;
  padding-left: 16px;
  border: 2px solid #bfbfbf;
  background-color: #f2f2f2;
  color: #111;
}
.task-search input {
  flex: 1;
  padding: 0;
  font-size: 22px;
}
.apps, .tray {
  display: flex;
}
.apps button {
  width: 74px;
}
.running {
  border: solid #76b9ed;
  border-width: 0 0 3px;
  padding-top: 3px;
}
.apps .running {
  width: 60px;
  margin: 0 7px;
}
.apps .current {
  width: 72px;
  margin: 0 1px;
  background-color: #606060;
}
.w, .badge {
  fill: #fff;
  font-size: 14px;
  font-weight: 700;
  text-anchor: middle;
}
.tray {
  margin-left: auto;
}
.tray button {
  width: 48px;
}
.tray .more {
  width: 20px;
  margin-right: 14px;
}
.tray .pen {
  width: 60px;
}
.tray .clock {
  flex-direction: column;
  width: 104px;
  line-height: 28px;
}
.tray .notify {
  position: relative;
  width: 72px;
}
.notify b {
  position: absolute;
  right: 17px;
  bottom: 6px;
  width: 25px;
  height: 25px;
  border: 1px solid #999;
  border-radius: 50%;
  background-color: rgba(40, 40, 40, 0.85);
  font-size: 15px;
  line-height: 23px;
}
.tray .desktop {
  width: 8px;
  border-left: 2px solid #777;
}
```
